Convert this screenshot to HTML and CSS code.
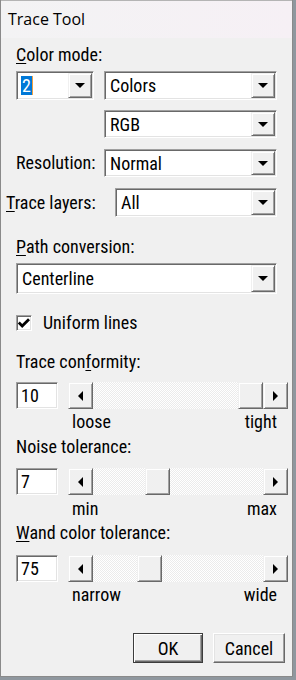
FILE: index.html
```html
<!DOCTYPE html>
<html>
<head>
<meta charset="utf-8">
<link rel="stylesheet" href="styles.css">
</head>
<body>
<div class="win">
  <div class="titlebar">Trace Tool</div>
  <div class="content">
    <div class="lbl m-color"><u>C</u>olor mode:</div>
    <div class="row m-r1">
      <div class="combo c-num h29"><span class="sel">2</span><span class="dd"><span class="arr"></span></span></div>
      <div class="combo c-wide h29"><span class="val">Colors</span><span class="dd"><span class="arr"></span></span></div>
    </div>
    <div class="row m-r2 indent">
      <div class="combo c-wide h28"><span class="val">RGB</span><span class="dd"><span class="arr"></span></span></div>
    </div>
    <div class="row m-r3">
      <span class="lbl side">Resolution:</span>
      <div class="combo c-wide h28"><span class="val">Normal</span><span class="dd"><span class="arr"></span></span></div>
    </div>
    <div class="row m-r3 pull">
      <span class="lbl side2"><u>T</u>race layers:</span>
      <div class="combo c-layers h29"><span class="val">All</span><span class="dd"><span class="arr"></span></span></div>
    </div>
    <div class="lbl m-path"><u>P</u>ath conversion:</div>
    <div class="combo c-full h31 m-pathc"><span class="val">Centerline</span><span class="dd"><span class="arr"></span></span></div>
    <div class="check m-check">
      <span class="box"><svg width="14" height="14" viewBox="0 0 14 14"><polyline points="1.8,6.6 5.2,10 12,3.2" fill="none" stroke="#000" stroke-width="2.8"/></svg></span>
      <span class="lbl">Uniform lines</span>
    </div>

    <div class="lbl m-sec1">Trace con<u>f</u>ormity:</div>
    <div class="row m-srow1">
      <div class="edit">10</div>
      <div class="sb">
        <span class="sbtn"><span class="la"></span></span>
        <span class="track"><span class="thumb" style="margin-left:145px"></span></span>
        <span class="sbtn"><span class="ra"></span></span>
      </div>
    </div>
    <div class="ticks m-t1"><span>loose</span><span>tight</span></div>

    <div class="lbl m-sec2">Noise tolerance:</div>
    <div class="row m-srow2">
      <div class="edit">7</div>
      <div class="sb">
        <span class="sbtn"><span class="la"></span></span>
        <span class="track"><span class="thumb" style="margin-left:52px"></span></span>
        <span class="sbtn"><span class="ra"></span></span>
      </div>
    </div>
    <div class="ticks m-t2"><span>min</span><span>max</span></div>

    <div class="lbl m-sec3"><u>W</u>and color tolerance:</div>
    <div class="row m-srow3">
      <div class="edit">75</div>
      <div class="sb">
        <span class="sbtn"><span class="la"></span></span>
        <span class="track"><span class="thumb" style="margin-left:44px"></span></span>
        <span class="sbtn"><span class="ra"></span></span>
      </div>
    </div>
    <div class="ticks m-t3"><span>narrow</span><span>wide</span></div>

    <div class="buttons">
      <span class="btn def">OK</span>
      <span class="btn cancel">Cancel</span>
    </div>
  </div>
</div>
</body>
</html>
```

FILE: styles.css
```css
html, body {
  margin: 0;
  padding: 0;
}
body {
  width: 296px;
  height: 680px;
  overflow: hidden;
  background: #8f979e;
  font-family: "Roboto Condensed", "Liberation Sans", Arial, sans-serif;
  font-size: 18px;
  color: #000;
}
.win {
  width: 293px;
  height: 677px;
  box-sizing: border-box;
  border: 1px solid #8a8a8a;
  border-top: none;
  background: #f0f0f0;
  display: flex;
  flex-direction: column;
}
.titlebar {
  flex: none;
  height: 38px;
  box-sizing: border-box;
  border-top: 1px solid #b4b4b4;
  background: linear-gradient(90deg, #f3f3f4, #f6f0f5);
  font-family: "Open Sans", "Liberation Sans", Arial, sans-serif;
  font-size: 16px;
  display: flex;
  align-items: center;
  padding-left: 7px;
  padding-bottom: 1px;
}
.content {
  display: flex;
  flex-direction: column;
  align-items: flex-start;
  padding-left: 15px;
}
.lbl {
  height: 20px;
  line-height: 20px;
  white-space: nowrap;
}
u {
  text-decoration-thickness: 1px;
  text-underline-offset: 2px;
}
.row {
  display: flex;
  align-items: center;
  gap: 10px;
}
.indent { margin-left: 88px; }
.pull { margin-left: -10px; }
.side { width: 78px; text-align: right; }
.side2 { width: 99px; }

/* vertical rhythm */
.m-color { margin-top: 7px; }
.m-r1 { margin-top: 6px; }
.m-r2 { margin-top: 10px; }
.m-r3 { margin-top: 11px; }
.m-path { margin-top: 20px; }
.m-pathc { margin-top: 6px; }
.m-check { margin-top: 19px; }
.m-sec1 { margin-top: 19px; }
.m-srow1 { margin-top: 10px; }
.m-t1 { margin-top: 3px; }
.m-sec2 { margin-top: 5px; }
.m-srow2 { margin-top: 11px; }
.m-t2 { margin-top: 4px; }
.m-sec3 { margin-top: 4px; }
.m-srow3 { margin-top: 12px; }
.m-t3 { margin-top: 3px; }

/* combo boxes */
.combo {
  box-sizing: border-box;
  display: flex;
  align-items: stretch;
  border: 1px solid;
  border-color: #a0a0a0 #ffffff #ffffff #a0a0a0;
  box-shadow: inset 1px 1px #696969, inset -1px -1px #e3e3e3;
  background: #fff;
  padding: 1px 1px 1px 5px;
}
.h28 { height: 28px; }
.h29 { height: 29px; }
.h31 { height: 31px; }
.c-num { width: 78px; padding-left: 4px; }
.c-wide { width: 173px; }
.c-layers { width: 162px; }
.c-full { width: 261px; }
.val {
  flex: 1;
  display: flex;
  align-items: center;
  white-space: nowrap;
}
.sel {
  align-self: center;
  height: 19px;
  line-height: 19px;
  padding: 0 1px;
  background: #0078d7;
  color: #fff;
  border-right: 1px solid #f0a040;
  margin-right: auto;
}
.dd {
  flex: none;
  width: 24px;
  box-sizing: border-box;
  background: #f0f0f0;
  border: 1px solid;
  border-color: #f0f0f0 #696969 #696969 #f0f0f0;
  box-shadow: inset 1px 1px #ffffff, inset -1px -1px #a0a0a0;
  display: flex;
  align-items: center;
  justify-content: center;
  margin-left: auto;
}
.arr {
  width: 0;
  height: 0;
  border-left: 5px solid transparent;
  border-right: 5px solid transparent;
  border-top: 5px solid #000;
}

/* checkbox */
.check {
  display: flex;
  align-items: center;
  gap: 11px;
  height: 20px;
}
.box {
  width: 16px;
  height: 16px;
  box-sizing: border-box;
  border: 1px solid;
  border-color: #a0a0a0 #ffffff #ffffff #a0a0a0;
  box-shadow: inset 1px 1px #696969, inset -1px -1px #e3e3e3;
  background: #fff;
  display: flex;
  align-items: center;
  justify-content: center;
}
.box svg { display: block; }

/* edit + scrollbar */
.edit {
  width: 42px;
  height: 27px;
  box-sizing: border-box;
  border: 1px solid;
  border-color: #a0a0a0 #ffffff #ffffff #a0a0a0;
  box-shadow: inset 1px 1px #696969, inset -1px -1px #e3e3e3;
  background: #fff;
  padding-left: 4px;
  line-height: 25px;
}
.sb {
  display: flex;
  width: 220px;
  height: 27px;
}
.sbtn, .thumb {
  flex: none;
  width: 25px;
  height: 27px;
  box-sizing: border-box;
  background: #f0f0f0;
  border: 1px solid;
  border-color: #f0f0f0 #696969 #696969 #f0f0f0;
  box-shadow: inset 1px 1px #ffffff, inset -1px -1px #a0a0a0;
  display: flex;
  align-items: center;
  justify-content: center;
}
.track {
  flex: 1;
  display: flex;
  background-color: #f4f4f4;
  background-image: repeating-conic-gradient(#ffffff 0 25%, #ebebeb 0 50%);
  background-size: 2px 2px;
}
.la {
  width: 0;
  height: 0;
  border-top: 5px solid transparent;
  border-bottom: 5px solid transparent;
  border-right: 5px solid #000;
}
.ra {
  width: 0;
  height: 0;
  border-top: 5px solid transparent;
  border-bottom: 5px solid transparent;
  border-left: 5px solid #000;
}
.ticks {
  display: flex;
  justify-content: space-between;
  width: 205px;
  margin-left: 56px;
  height: 20px;
  line-height: 20px;
}

/* buttons */
.buttons {
  align-self: stretch;
  display: flex;
  justify-content: flex-end;
  gap: 10px;
  padding-right: 7px;
  margin-top: 28px;
}
.btn {
  box-sizing: border-box;
  height: 30px;
  width: 72px;
  background: #f0f0f0;
  border: 1px solid;
  border-color: #ffffff #696969 #696969 #ffffff;
  box-shadow: inset -1px -1px #a0a0a0, inset 1px 1px #e3e3e3;
  display: flex;
  align-items: center;
  justify-content: center;
}
.btn.def {
  width: 70px;
  border-color: #3c3c3c;
  box-shadow: inset 1px 1px #ffffff, inset -1px -1px #696969, inset -2px -2px #a0a0a0;
}
```
